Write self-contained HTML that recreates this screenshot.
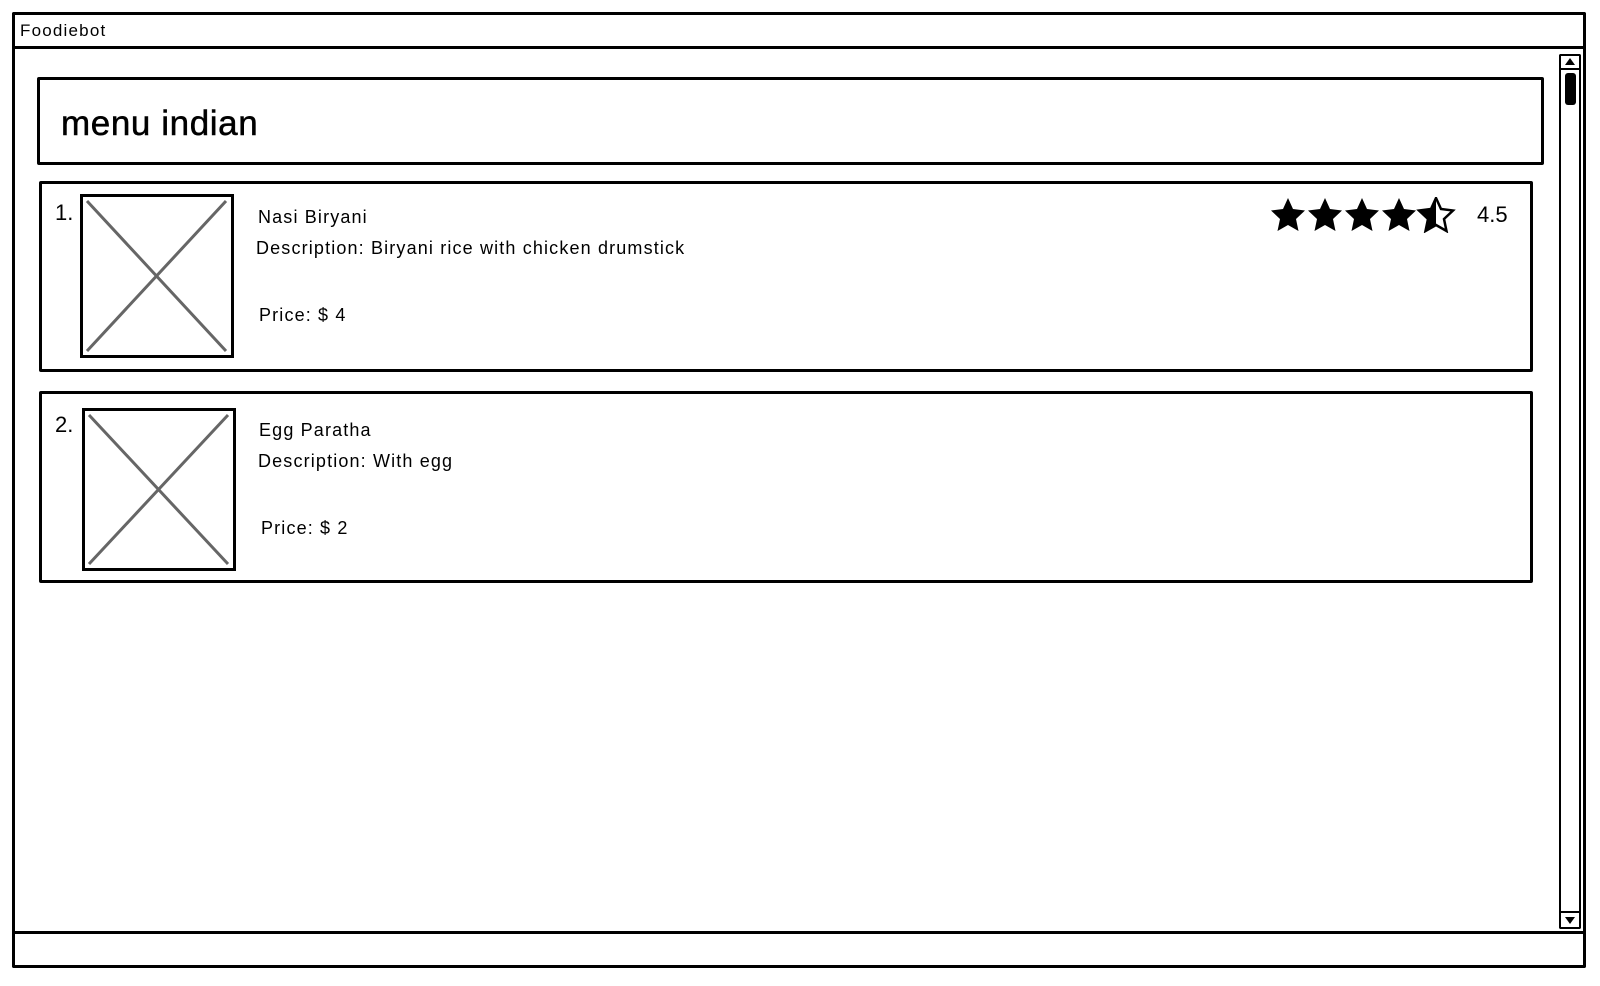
<!DOCTYPE html>
<html><head><meta charset="utf-8"><style>
*{margin:0;padding:0;box-sizing:border-box}
body{width:1600px;height:986px;background:#fff;position:relative;overflow:hidden;font-family:"Liberation Sans",sans-serif;color:#000}
.b{position:absolute;border:3px solid #000;border-radius:2px}
.t{position:absolute;white-space:nowrap;line-height:1}
.s{font-size:18px;letter-spacing:1.15px}
</style></head><body>
<div class="b" style="left:12px;top:12px;width:1574px;height:956px"></div>
<div class="b" style="left:12px;top:12px;width:1574px;height:37px;border-bottom-width:3px"></div>
<div class="t" style="left:20px;top:22px;font-size:17px;letter-spacing:1.2px">Foodiebot</div>
<div class="b" style="left:12px;top:931px;width:1574px;height:37px"></div>
<div class="b" style="left:1559px;top:54px;width:22px;height:875px;border-width:2px"></div>
<div class="b" style="left:1559px;top:54px;width:22px;height:16px;border-width:2px"></div>
<div style="position:absolute;left:1565px;top:58px;width:0;height:0;border-left:5px solid transparent;border-right:5px solid transparent;border-bottom:7px solid #000"></div>
<div style="position:absolute;left:1565px;top:73px;width:11px;height:32px;background:#000;border-radius:3px"></div>
<div class="b" style="left:1559px;top:911px;width:22px;height:18px;border-width:2px"></div>
<div style="position:absolute;left:1565px;top:917px;width:0;height:0;border-left:5px solid transparent;border-right:5px solid transparent;border-top:7px solid #000"></div>
<div class="b" style="left:37px;top:77px;width:1507px;height:88px"></div>
<div class="t" style="left:61px;top:106px;font-size:35px;letter-spacing:0.6px;-webkit-text-stroke:0.5px #000">menu indian</div>
<div class="b" style="left:39px;top:181px;width:1494px;height:191px"></div>
<div class="t" style="left:55px;top:202px;font-size:22px">1.</div>
<svg style="position:absolute;left:80px;top:194px" width="154" height="164"><rect x="1.5" y="1.5" width="151" height="161" fill="#fff" stroke="#000" stroke-width="3"/><path d="M7 7L146 157M146 7L7 157" stroke="#666" stroke-width="3"/></svg>
<div class="t s" style="left:258px;top:208px">Nasi Biryani</div>
<div class="t s" style="left:256px;top:239px">Description: Biryani rice with chicken drumstick</div>
<div class="t s" style="left:259px;top:306px">Price: $ 4</div>
<svg style="position:absolute;left:1270px;top:197px" width="190" height="36" viewBox="0 0 190 36">
<g fill="#000"><path id="s" d="M18 1l5 11 12 1.5-9 8.5 2.5 12L18 28 7.5 34 10 22 1 13.5 13 12z"/>
<use href="#s" x="37"/><use href="#s" x="74"/><use href="#s" x="111"/></g>
<path d="M166 1l5 11 12 1.5-9 8.5 2.5 12L166 28 155.5 34 158 22 149 13.5 161 12z" fill="none" stroke="#000" stroke-width="2.5"/>
<path d="M166 1L161 12 149 13.5 158 22 155.5 34 166 28z" fill="#000"/>
</svg>
<div class="t" style="left:1477px;top:204px;font-size:22px">4.5</div>
<div class="b" style="left:39px;top:391px;width:1494px;height:192px"></div>
<div class="t" style="left:55px;top:414px;font-size:22px">2.</div>
<svg style="position:absolute;left:82px;top:408px" width="154" height="163"><rect x="1.5" y="1.5" width="151" height="160" fill="#fff" stroke="#000" stroke-width="3"/><path d="M7 7L146 156M146 7L7 156" stroke="#666" stroke-width="3"/></svg>
<div class="t s" style="left:259px;top:421px">Egg Paratha</div>
<div class="t s" style="left:258px;top:452px">Description: With egg</div>
<div class="t s" style="left:261px;top:519px">Price: $ 2</div>
</body></html>
